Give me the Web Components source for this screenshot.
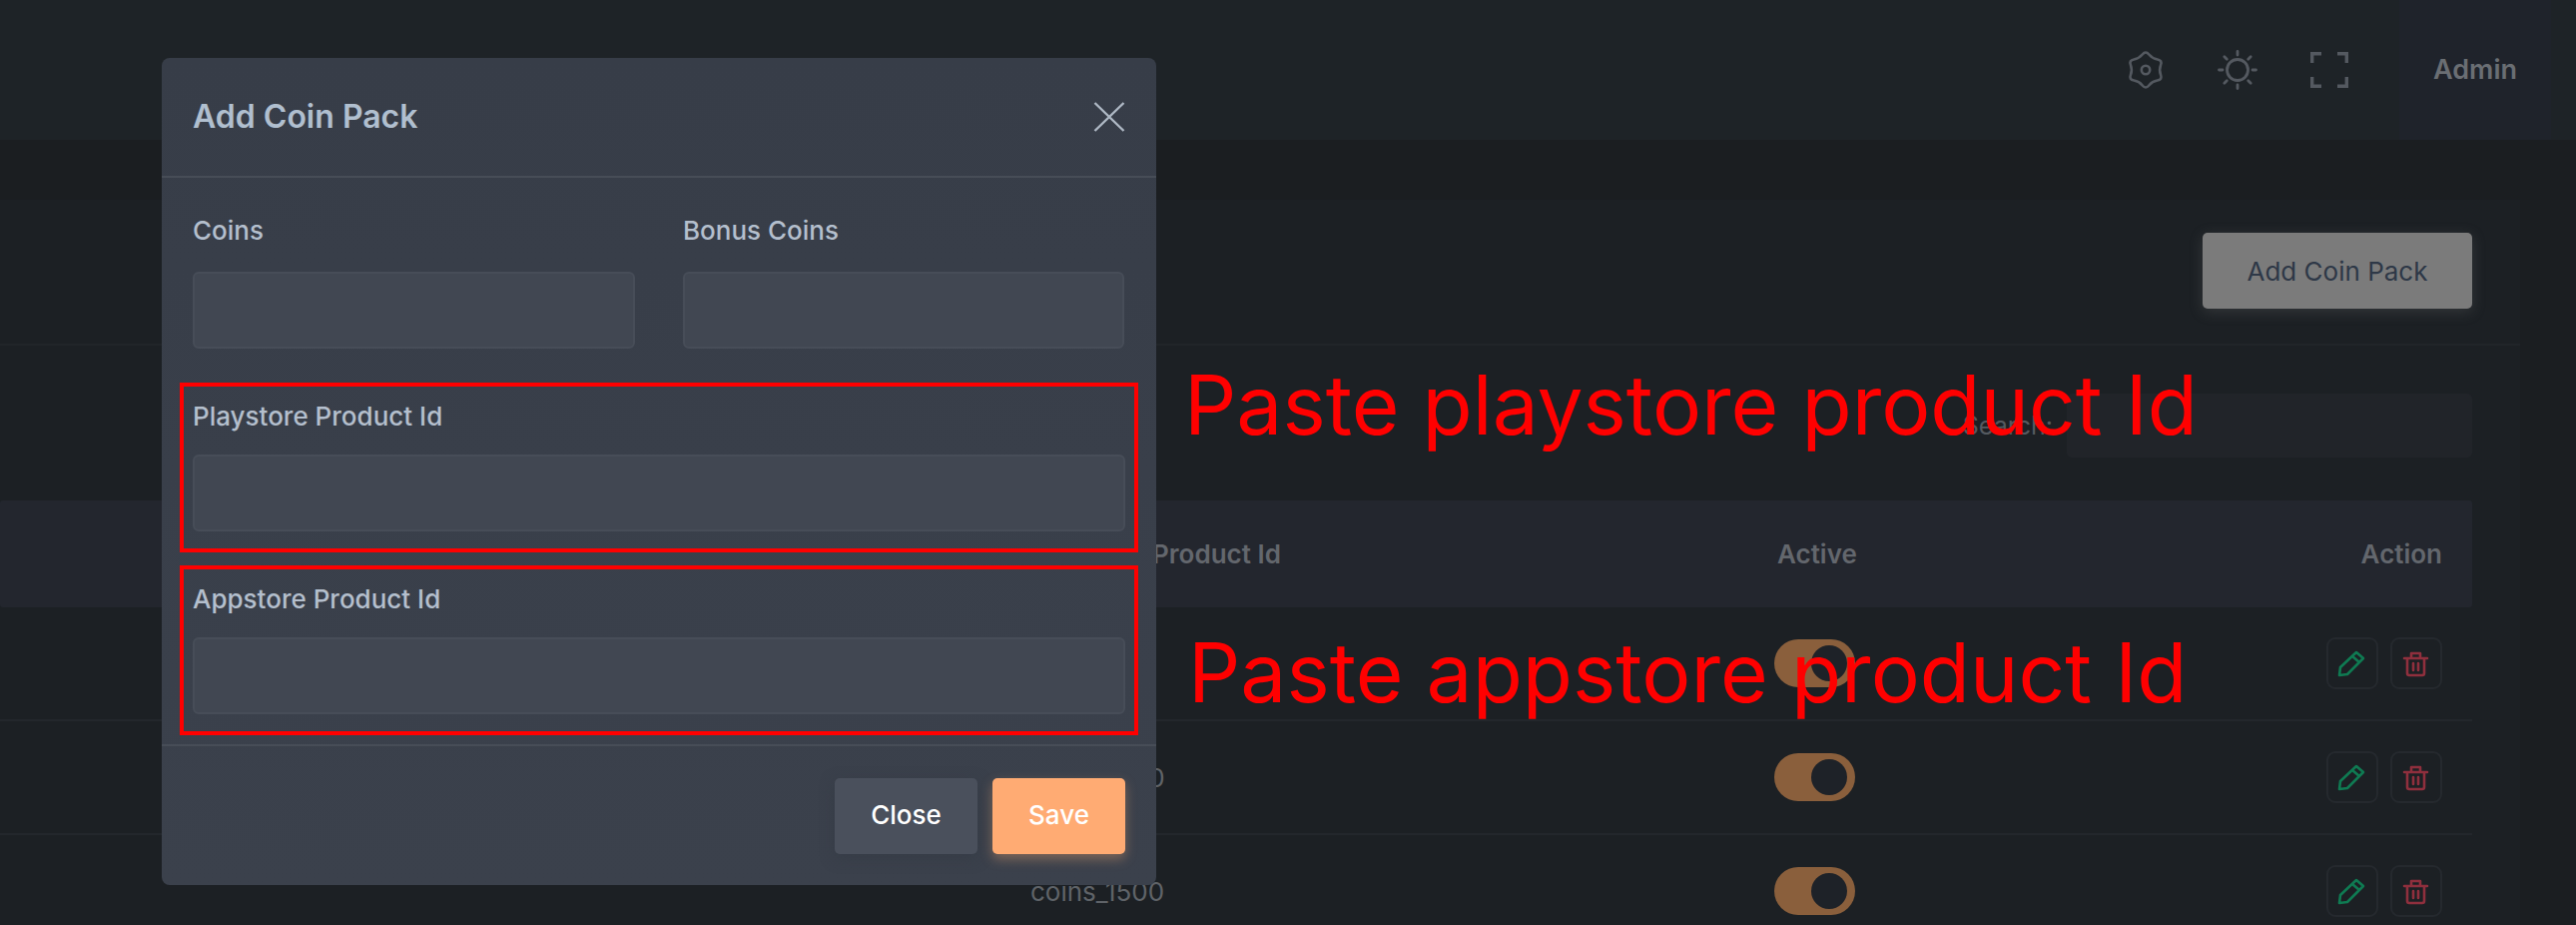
<!DOCTYPE html>
<html lang="en"><head><meta charset="utf-8"><title>Add Coin Pack</title>
<style>
html,body{margin:0;padding:0;width:2580px;height:926px;overflow:hidden;background:#1b1e21;font-family:Inter,"Liberation Sans",sans-serif}
</style></head><body>
<admin-page>
  <top-bar slot="top">Admin</top-bar>
  <data-card slot="main">
    <table-row kind="head" code="Appstore Product Id"></table-row>
    <table-row code="coins_500"></table-row>
    <table-row code="coins_1000"></table-row>
    <table-row code="coins_1500"></table-row>
  </data-card>
  <modal-dialog slot="overlay" heading="Add Coin Pack">
    <div style="display:grid;grid-template-columns:443px 442px;column-gap:48px">
      <form-field label="Coins"></form-field>
      <form-field label="Bonus Coins"></form-field>
    </div>
    <form-field label="Playstore Product Id" marked></form-field>
    <form-field label="Appstore Product Id" marked second></form-field>
  </modal-dialog>
  <note-label slot="overlay" style="left:1186px;top:356px" spacing="0">Paste playstore product Id</note-label>
  <note-label slot="overlay" style="left:1190px;top:624px" spacing="0">Paste appstore product Id</note-label>
</admin-page>
<script>
const def=(name,css,html,setup)=>customElements.define(name,class extends HTMLElement{
  connectedCallback(){ if(this.shadowRoot) return;
    const r=this.attachShadow({mode:'open'});
    r.innerHTML=`<style>${css}</style>`+(typeof html==='function'?html(this):html);
    setup&&setup(r,this);}
});
function gearPath(){
  const c=18,pts=[];
  for(let i=0;i<12;i++){const a=(-90+i*30)*Math.PI/180,R=i%2?13.2:19.5;pts.push([c+R*Math.cos(a),c+R*Math.sin(a)]);}
  const mid=(p,q)=>[(p[0]+q[0])/2,(p[1]+q[1])/2],f=n=>n.toFixed(2);
  let m=mid(pts[11],pts[0]),d=`M${f(m[0])} ${f(m[1])}`;
  for(let i=0;i<12;i++){const n=mid(pts[i],pts[(i+1)%12]);d+=`Q${f(pts[i][0])} ${f(pts[i][1])} ${f(n[0])} ${f(n[1])}`;}
  return d+'Z';
}
def('admin-page',`:host{display:block;position:relative;width:2580px;height:926px;overflow:hidden}
.main{padding:60px 56px 0 0}`,`<slot name="top"></slot><div class="main"><slot name="main"></slot></div><slot name="overlay"></slot>`);

def('top-bar',`:host{display:flex;align-items:center;justify-content:flex-end;height:140px;background:#1e2327;padding-right:25px;box-sizing:border-box}
.icons{display:flex;align-items:center;gap:0;height:100%}
.i{width:92px;display:flex;justify-content:center}
svg{display:block;fill:none;stroke:#545960}
.user{height:100%;width:152px;margin-left:24px;background:#1f232b;display:flex;align-items:center;justify-content:center;box-sizing:border-box;
 color:#6a6e73;font-weight:600;font-size:27px;padding-bottom:1px}`,
`<div class="icons">
 <div class="i"><svg width="36" height="38" viewBox="0 0 36 36" stroke-width="2.6"><path id="g"/><circle cx="18" cy="18" r="4.2"/></svg></div>
 <div class="i"><svg width="42" height="42" viewBox="0 0 42 42" stroke-width="2.8" stroke-linecap="round"><circle cx="21" cy="21" r="10.5"/><path d="M21 2.5v3.5M21 36v3.5M2.500 21h3.500M36 21h3.500M7.800 7.800l2.500 2.500M31.700 31.700l2.500 2.500M7.800 34.200l2.500-2.500M31.700 10.300l2.500-2.500"/></svg></div>
 <div class="i"><svg width="38" height="36" viewBox="0 0 38 36" stroke-width="3.4"><path d="M1.700 11V1.700H11M27 1.700h9.300V11M1.700 25v9.300H11M27 34.300h9.300V25"/></svg></div>
</div><div class="user"><slot></slot></div>`,(r)=>{r.getElementById('g').setAttribute('d',gearPath())});

def('data-card',`:host{display:block;height:900px;background:#1c2024;font-family:inherit}
.head{height:146px;border-bottom:2px solid #212529;box-sizing:border-box;display:flex;align-items:center;justify-content:flex-end;padding:0 48px 2px 0}
.btn{height:76px;width:270px;border-radius:5px;background:#7b7b7b;color:#2e3847;font-size:26px;display:flex;align-items:center;justify-content:center;box-shadow:0 3px 14px rgba(120,120,120,.28)}
.search{display:flex;justify-content:flex-end;align-items:center;height:64px;margin:48px 48px 0 0;gap:14px;color:#555a60;font-size:25px}
.search i{display:block;width:406px;height:64px;border-radius:5px;background:#212429}
.rows{margin:43px 48px 0 0}`,
`<div class="head"><div class="btn">Add Coin Pack</div></div>
<div class="search"><span>Search:</span><i></i></div>
<div class="rows"><slot></slot></div>`);

def('table-row',`:host{display:grid;grid-template-columns:1032px 745px 1fr auto;align-items:center;height:114px;box-sizing:border-box;border-bottom:2px solid #23272c;padding-right:30px;color:#5f6368;font-size:26px}
:host([kind=head]){height:107px;background:#23262e;border:0;font-weight:600;color:#63676d;border-radius:3px}
.active{padding-left:3px}
.acts{display:flex;gap:12px}
.a{width:52px;height:52px;border:2px solid #25292e;border-radius:9px;box-sizing:border-box;position:relative}
svg{display:block;position:absolute;left:-2px;top:-2px;fill:none;stroke-width:2.6;stroke-linejoin:round;stroke-linecap:round}
.t{display:block;width:81px;height:48px;border-radius:24px;background:#8a5f3c;position:relative}
.t:after{content:"";position:absolute;right:8px;top:6px;width:36px;height:36px;border-radius:50%;background:#1e2228}`,
h=>h.getAttribute('kind')==='head'
 ?`<span></span><span>${h.getAttribute('code')}</span><span class="active">Active</span><span>Action</span>`
 :`<span></span><span>${h.getAttribute('code')}</span><span><i class="t"></i></span><span class="acts">
 <span class="a"><svg width="52" height="52" stroke="#0f7a52"><path d="M13 38L14 30L30 15L37 21L21 37Z M26 19L33 25"/></svg></span>
 <span class="a"><svg width="52" height="52" stroke="#8f2f3d"><path d="M14 21H37M17 21V36Q17 38 19 38H32Q34 38 34 36V21M21 21V16H30V21M23 26V33M28 26V33"/></svg></span>
 </span>`);

def('modal-dialog',`:host{position:absolute;left:162px;top:58px;width:996px;height:828px;background:linear-gradient(#373d48,#3b414c);border-radius:8px;display:flex;flex-direction:column;overflow:hidden;box-sizing:border-box}
header{height:120px;border-bottom:2px solid #474d57;box-sizing:border-box;display:flex;align-items:center;justify-content:space-between;padding:0 31px;flex:none}
h2{margin:0;font-size:32px;font-weight:600;color:#b0bfcf;padding-bottom:2px}
.body{padding:34px 31px 0;flex:1}
footer{height:141px;border-top:2px solid #474d57;box-sizing:border-box;display:flex;justify-content:flex-end;gap:15px;padding:32px 31px 0;flex:none}
.b{height:76px;border-radius:5px;display:flex;align-items:center;justify-content:center;font-size:26px;font-weight:500;color:#fff;padding-bottom:4px;box-sizing:border-box}
.c{width:143px;background:#4a505c;box-shadow:0 4px 14px rgba(50,55,65,.5)}
.s{width:133px;background:#ffab73;box-shadow:0 5px 12px rgba(255,171,115,.35)}`,
h=>`<header><h2>${h.getAttribute('heading')}</h2><svg width="32" height="30" viewBox="0 0 32 30" fill="none" stroke="#aeb8c4" stroke-width="2.400"><path d="M1.500 1L30.500 29M30.500 1L1.500 29"/></svg></header>
<div class="body"><slot></slot></div>
<footer><div class="b c">Close</div><div class="b s">Save</div></footer>`);

def('form-field',`:host{display:block;color:#b4bfcd;font-size:26px;font-weight:500}
label{display:block;line-height:38px;height:38px}
.in{display:block;height:77px;margin-top:22px;background:#414752;border:2px solid #474d58;border-radius:6px;box-sizing:border-box}
:host([marked]){margin:34px -13px 0;outline:0;border:4px solid #f00;padding:0 9px;height:170px;box-sizing:border-box}
:host([marked]) label{margin-top:11px}
:host([marked]) .in{margin-top:19px}
:host([second]){margin-top:13px}`,
h=>`<label>${h.getAttribute('label')}</label><div class="in"></div>`);

def('note-label',`:host{position:absolute;color:#f00;font-size:82px;line-height:100px;white-space:nowrap;font-weight:400}`,`<slot></slot>`);
</script>
</body></html>
